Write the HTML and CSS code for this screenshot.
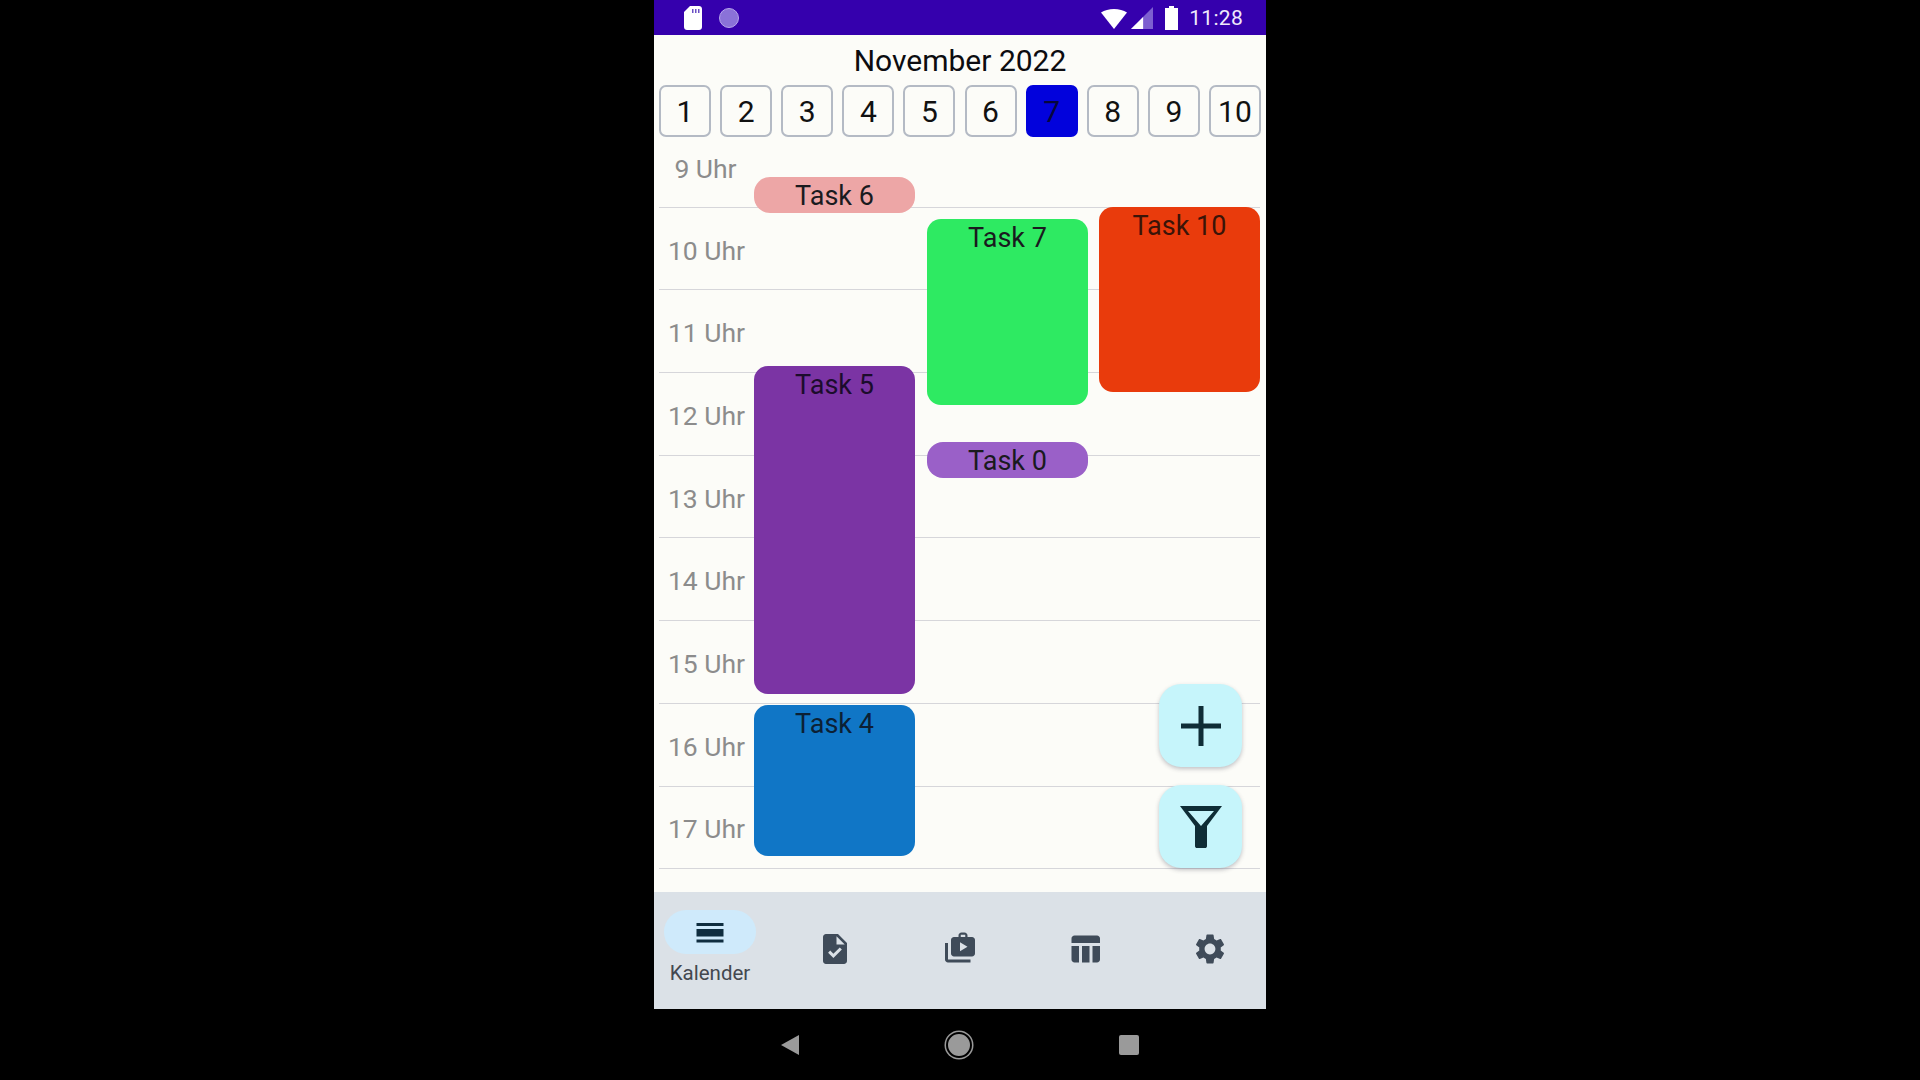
FILE: index.html

```html
<!DOCTYPE html>
<html lang="en">
<head>
  <meta charset="UTF-8" />
  <title>Kalender</title>
  <meta name="viewport" content="width=device-width, initial-scale=1" />
  <link rel="stylesheet" href="styles.css">
</head>
<body>
  <div class="phone">
    <div class="status-bar">
      <div class="status-left">
        <svg class="sd-icon" viewBox="0 0 18 24"><path d="M6 0h9c1.7 0 3 1.300 3 3v18c0 1.700-1.300 3-3 3H3c-1.700 0-3-1.300-3-3V6z" fill="#fff"/><path d="M8 3h1.500v4H8zM11 3h1.500v4H11zM14 3h1.500v4H14z" fill="#6a4fc4"/></svg>
        <span class="status-dot"></span>
      </div>
      <div class="status-right">
        <svg class="wifi-icon" viewBox="0 0 26 20"><path d="M0 3.500C3.500 1.200 8 0 13 0s9.500 1.200 13 3.500L13 20z" fill="#fff"/></svg>
        <svg class="signal-icon" viewBox="0 0 20 20"><path d="M20 0v20H0z" fill="#7d5fd0"/><path d="M11 9v11H0z" fill="#fff"/></svg>
        <svg class="battery-icon" viewBox="0 0 13 24"><path d="M4 0h5v2h4v22H0V2h4z" fill="#fff"/></svg>
        <span class="clock">11:28</span>
      </div>
    </div>

    <div class="main">
      <h2 class="month">November 2022</h2>
      <div class="days">
        <div class="day">1</div>
        <div class="day">2</div>
        <div class="day">3</div>
        <div class="day">4</div>
        <div class="day">5</div>
        <div class="day">6</div>
        <div class="day selected">7</div>
        <div class="day">8</div>
        <div class="day">9</div>
        <div class="day">10</div>
      </div>

      <div class="schedule">
        <div class="hour"><span>9 Uhr</span></div>
        <div class="hour"><span>10 Uhr</span></div>
        <div class="hour"><span>11 Uhr</span></div>
        <div class="hour"><span>12 Uhr</span></div>
        <div class="hour"><span>13 Uhr</span></div>
        <div class="hour"><span>14 Uhr</span></div>
        <div class="hour"><span>15 Uhr</span></div>
        <div class="hour"><span>16 Uhr</span></div>
        <div class="hour"><span>17 Uhr</span></div>

        <div class="task task-6">Task 6</div>
        <div class="task task-5">Task 5</div>
        <div class="task task-4">Task 4</div>
        <div class="task task-7">Task 7</div>
        <div class="task task-0">Task 0</div>
        <div class="task task-10">Task 10</div>
      </div>

      <button class="fab fab-add">
        <svg viewBox="0 0 40 40"><path d="M17.500 0h5v17.500H40v5H22.500V40h-5V22.500H0v-5h17.500z" fill="#0f2d36"/></svg>
      </button>
      <button class="fab fab-filter">
        <svg viewBox="0 0 44 44"><path d="M1 1h42L28 21v20c0 1.500-1 2-2 2h-8c-1 0-2-.5-2-2V21zM9 6l13 15L35 6z" fill="#0f2d36" fill-rule="evenodd"/></svg>
      </button>
    </div>

    <div class="nav">
      <div class="nav-item active">
        <div class="nav-pill">
          <svg viewBox="0 0 24 24"><path d="M3 17h18v2H3zm0-7h18v5H3zm0-4h18v2H3z" fill="#0f2d3f"/></svg>
        </div>
        <span>Kalender</span>
      </div>
      <div class="nav-item">
        <svg viewBox="0 0 24 24"><path d="M14 2H6c-1.100 0-1.990.9-1.990 2L4 20c0 1.100.89 2 1.990 2H18c1.100 0 2-.9 2-2V8l-6-6zm-3.060 16L7.400 14.460l1.410-1.410 2.120 2.120 4.240-4.240 1.410 1.410L10.940 18zM13 9V3.500L18.500 9H13z" fill="#3f4b59"/></svg>
      </div>
      <div class="nav-item">
        <svg viewBox="0 0 24 24"><path fill-rule="evenodd" d="M11 4V3c0-1.100.9-2 2-2h2c1.100 0 2 .9 2 2v1h3c1.100 0 2 .9 2 2v9c0 1.100-.9 2-2 2H8c-1.100 0-2-.9-2-2V6c0-1.100.9-2 2-2zm1.500 0h3V2.500h-3zM12 7.500v6l5-3z" fill="#3f4b59"/><path d="M2 8h2v11h15v2H4c-1.100 0-2-.9-2-2z" fill="#3f4b59"/></svg>
      </div>
      <div class="nav-item">
        <svg viewBox="0 0 24 24"><path d="M10 10.020h5V21h-5zM17 21h3c1.100 0 2-.9 2-2v-9h-5v11zm3-18H5c-1.100 0-2 .9-2 2v3h19V5c0-1.100-.9-2-2-2zM3 19c0 1.100.9 2 2 2h3V10H3v9z" fill="#3f4b59"/></svg>
      </div>
      <div class="nav-item">
        <svg viewBox="0 0 24 24"><path d="M19.140 12.940c.04-.3.06-.61.06-.94 0-.32-.02-.64-.07-.94l2.030-1.580c.18-.14.23-.41.12-.61l-1.920-3.320c-.12-.22-.37-.29-.59-.22l-2.390.96c-.5-.38-1.030-.7-1.620-.94l-.36-2.540c-.04-.24-.24-.41-.48-.41h-3.840c-.24 0-.43.17-.47.41l-.36 2.540c-.59.24-1.130.57-1.620.94l-2.390-.96c-.22-.08-.47 0-.59.22L2.740 8.870c-.12.21-.08.47.12.61l2.030 1.580c-.05.3-.09.63-.09.94s.02.64.07.94l-2.030 1.580c-.18.14-.23.41-.12.61l1.920 3.320c.12.22.37.29.59.22l2.390-.96c.5.38 1.030.7 1.620.94l.36 2.540c.05.24.24.41.48.41h3.840c.24 0 .44-.17.47-.41l.36-2.540c.59-.24 1.130-.56 1.620-.94l2.390.96c.22.08.47 0 .59-.22l1.920-3.320c.12-.22.07-.47-.12-.61l-2.010-1.580zM12 15.600c-1.980 0-3.600-1.620-3.600-3.600s1.620-3.600 3.600-3.600 3.600 1.620 3.600 3.600-1.620 3.600-3.600 3.600z" fill="#3f4b59"/></svg>
      </div>
    </div>

    <div class="android-bar">
      <span class="back"></span>
      <span class="home"></span>
      <span class="recent"></span>
    </div>
  </div>
</body>
</html>
```

FILE: styles.css

```css
* { box-sizing: border-box; }
html, body { height: 100%; }
body { margin: 0; background: #000; font-family: Roboto, sans-serif; overflow: hidden; }

.phone { width: 612px; height: 1080px; margin: 0 auto; display: flex; flex-direction: column; }

/* status bar */
.status-bar { height: 35px; background: #3500ad; display: flex; justify-content: space-between; align-items: center; padding: 0 23px 0 30px; }
.status-left { display: flex; align-items: center; gap: 17px; }
.sd-icon { width: 18px; height: 24px; display: block; }
.status-dot { width: 20px; height: 20px; border-radius: 50%; background: #8a72d8; border: 1px solid #b7a6ec; }
.status-right { display: flex; align-items: center; }
.wifi-icon { width: 26px; height: 20px; margin-right: 4px; margin-top: 2px; }
.signal-icon { width: 22px; height: 22px; margin-right: 12px; margin-top: 1px; }
.battery-icon { width: 13px; height: 24px; margin-right: 11px; }
.clock { color: #efe9fb; font-size: 21px; letter-spacing: .3px; }

/* calendar */
.main { height: 857px; position: relative; background: #fcfcf8; }
.month { margin: 0; height: 50px; line-height: 52px; text-align: center; font-size: 30px; font-weight: 400; color: #0c0c10; }
.days { display: flex; justify-content: space-between; padding: 0 5px 0 5px; }
.day { width: 52px; height: 52px; padding-top: 1px; display: flex; align-items: center; justify-content: center; border: 2px solid #b4bac4; border-radius: 7px; font-size: 30px; color: #111; }
.day.selected { background: #0202dc; border-color: #0202dc; color: #06063c; }

.schedule { position: relative; margin-top: -12px; }
.hour { height: 82.7px; margin: 0 6px 0 5px; border-bottom: 1.500px solid #d6d6da; display: flex; align-items: center; padding-top: 3px; }
.hour span { width: 95px; text-align: center; font-size: 26.500px; color: #8c8c8c; }
.hour:first-child span { width: 93px; padding-top: 2px; }

.task { position: absolute; width: 161px; border-radius: 14px; text-align: center; font-size: 27px; line-height: 39px; color: #1a1a1e; }
.task-6 { left: 100px; top: 52px; height: 36px; background: #eda6a6; border-radius: 16px; }
.task-5 { left: 100px; top: 241px; height: 328px; background: #7b34a4; color: #1c0c2c; }
.task-4 { left: 100px; top: 580px; height: 151px; background: #1076c6; color: #0c2034; }
.task-7 { left: 273px; top: 94px; height: 186px; background: #2eea62; }
.task-0 { left: 273px; top: 317px; height: 36px; background: #9a60c8; border-radius: 16px; }
.task-10 { left: 445px; top: 82px; height: 185px; background: #e93b0c; color: #3a1408; }

.fab { position: absolute; left: 505px; width: 83px; height: 83px; padding: 0; border: 0; border-radius: 22px; background: #c6f5fb; box-shadow: 0 2px 4px rgba(60, 60, 80, .3); display: flex; align-items: center; justify-content: center; }
.fab-add { top: 649px; }
.fab-add svg { width: 40px; height: 40px; }
.fab-filter { top: 750px; }
.fab-filter svg { width: 44px; height: 44px; }

/* bottom navigation */
.nav { height: 117px; padding: 0 8px 3px; background: #dbe1e7; display: flex; justify-content: space-between; }
.nav-item { width: 96px; display: flex; flex-direction: column; align-items: center; justify-content: center; }
.nav-item svg { width: 36px; height: 36px; display: block; }
.nav-item.active { justify-content: flex-start; padding-top: 18px; }
.nav-pill { width: 92px; height: 44px; border-radius: 22px; background: #cfeafb; display: flex; align-items: center; justify-content: center; }
.nav-item span { font-size: 20.500px; color: #43484f; margin-top: 7px; }

/* android buttons */
.android-bar { height: 71px; background: #000; display: flex; justify-content: space-between; align-items: center; padding: 0 127px; }
.back { width: 0; height: 0; border-style: solid; border-width: 10px 18px 10px 0; border-color: transparent #9a9a9a transparent transparent; }
.home { width: 26px; height: 26px; border-radius: 50%; background: #9a9a9a; border: 2px solid #000; box-shadow: 0 0 0 1.500px #9a9a9a; }
.recent { width: 20px; height: 20px; border-radius: 2px; background: #9a9a9a; }
```
